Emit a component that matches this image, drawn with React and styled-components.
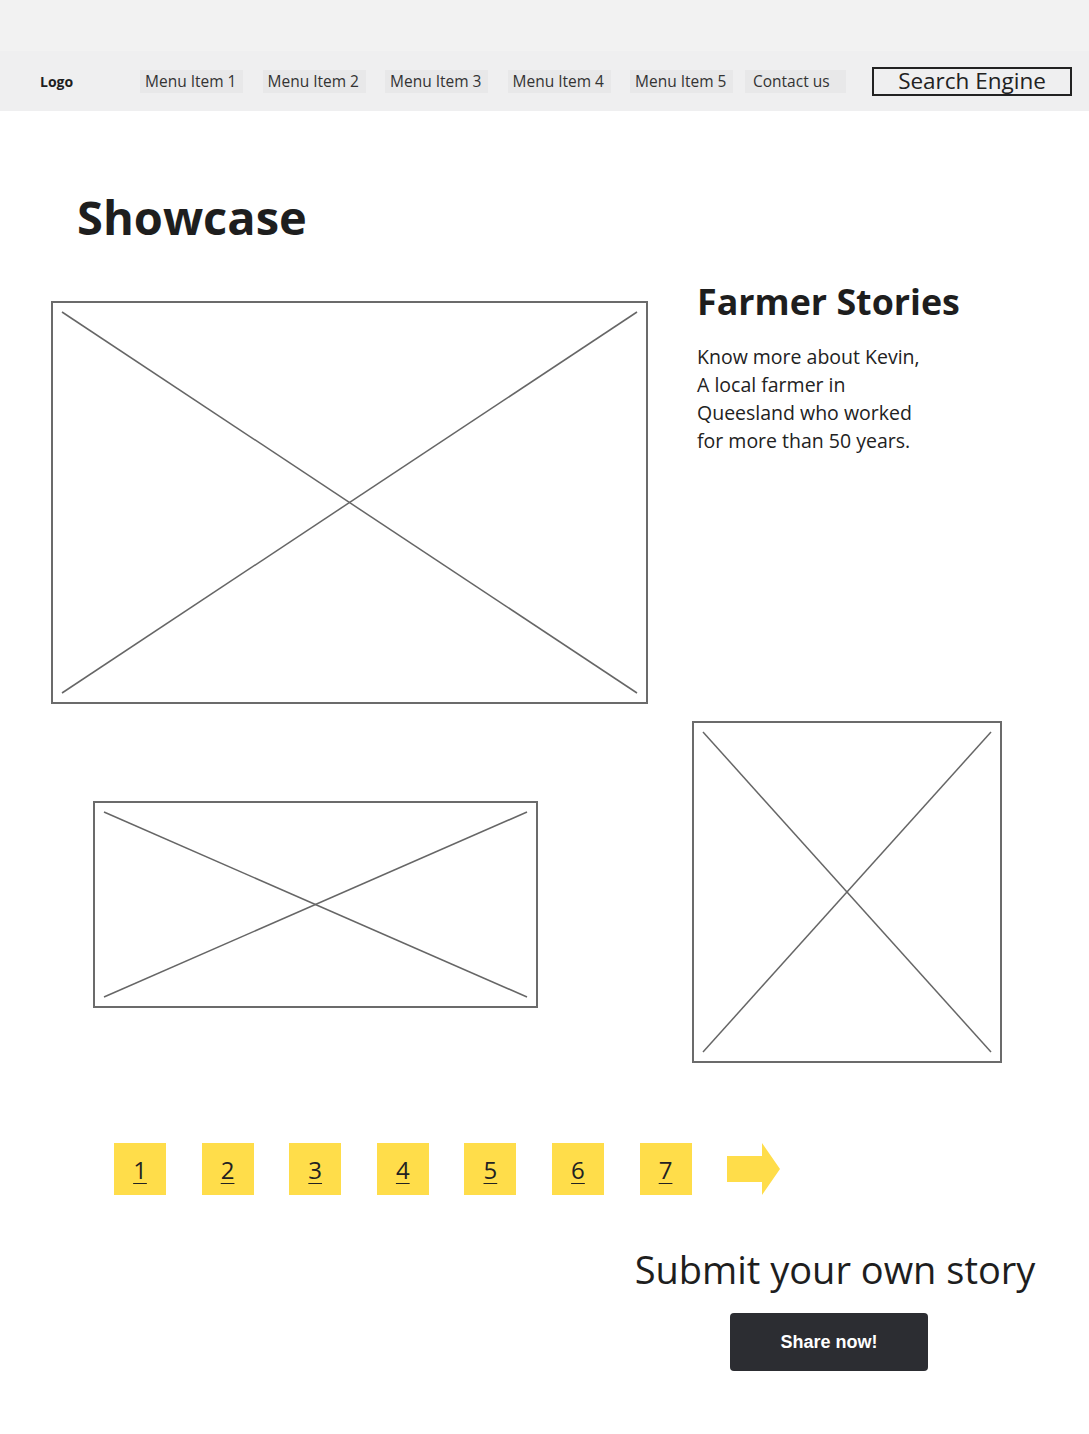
import styled, { createGlobalStyle } from 'styled-components'

//#     --- Global
const GlobalStyle = createGlobalStyle`
    body{
        margin: 0;
        background-color: #ffffff;
        font-family: "Open Sans", "Liberation Sans", sans-serif;
        color: #222222;
    }
`
const Page = styled.div`
    width: 1089px;
    min-height: 1434px;
    background-color: #ffffff;
`
//#     --- Header
const TopBand = styled.div`
    height: 51px;
    background-color: #f2f2f2;
`
const Nav = styled.nav`
    height: 60px;
    background-color: #efeff0;
    display: flex;
    align-items: center;
    padding-left: 40px;
`
const Logo = styled.div`
    width: 100px;
    font-size: 14px;
    font-weight: 700;
    color: #1e1e1e;
`
const MenuList = styled.ul`
    display: flex;
    align-items: center;
    gap: 19.5px;
    margin: 0;
    padding: 0;
    list-style: none;
`
const MenuItem = styled.li`
    width: ${ ({ wide }) => wide ? "101px" : "103px" };
    height: 23px;
    box-sizing: border-box;
    padding-left: ${ ({ wide }) => wide ? "8px" : "5px" };
    margin-left: ${ ({ wide }) => wide ? "-7.5px" : "0" };
    background-color: #e8e8e9;
    font-size: 15.5px;
    line-height: 23px;
    color: #333333;
    white-space: nowrap;
`
const SearchBox = styled.div`
    margin-left: 26px;
    width: 200px;
    height: 29px;
    box-sizing: border-box;
    border: 2px solid #222222;
    font-size: 22.5px;
    line-height: 24px;
    text-align: center;
    color: #222222;
`
//#     --- Main
const Main = styled.main`
    padding: 78px 0 0 51px;
`
const Title = styled.h1`
    margin: 0 0 56px 26px;
    font-size: 47px;
    line-height: 56px;
    font-weight: 700;
    color: #1e1e1e;
`
const Gallery = styled.div`
    display: grid;
    grid-template-columns: 597px 1fr;
    column-gap: 44px;
    row-gap: 17px;
    align-items: start;
`
const Placeholder = styled.div`
    width: ${ ({ w }) => w }px;
    height: ${ ({ h }) => h }px;
    box-sizing: border-box;
    border: 2px solid #6b6b6b;
    padding: 9px;
    margin: ${ ({ m }) => m || "0" };
    svg{
        display: block;
        width: 100%;
        height: 100%;
        overflow: visible;
    }
`
const Story = styled.div`
    padding-left: 5px;
    margin-top: -21px;
`
const StoryTitle = styled.h2`
    margin: 0 0 21px 0;
    font-size: 35.8px;
    line-height: 42px;
    font-weight: 700;
    color: #1e1e1e;
`
const StoryText = styled.p`
    margin: 0;
    font-size: 19.5px;
    line-height: 28px;
    color: #222222;
`
//#     --- Pagination
const Pager = styled.div`
    display: flex;
    align-items: center;
    gap: 35.6px;
    margin: 80px 0 0 63px;
`
const PageBox = styled.a`
    width: 52px;
    height: 52px;
    display: flex;
    align-items: center;
    justify-content: center;
    background-color: #ffdd4a;
    font-size: 24px;
    color: #222222;
    text-decoration: underline;
    text-decoration-thickness: 1px;
    text-underline-offset: 4px;
`
//#     --- Submit
const Submit = styled.section`
    display: flex;
    flex-direction: column;
    align-items: center;
    width: 420px;
    margin: 48px 0 0 574px;
`
const SubmitTitle = styled.h3`
    margin: 0;
    font-size: 38px;
    line-height: 52px;
    font-weight: 400;
    color: #1e1e1e;
    white-space: nowrap;
`
const ShareButton = styled.button`
    margin: 18px 12px 0 0;
    width: 198px;
    height: 58px;
    border: none;
    border-radius: 4px;
    background-color: #2c2d32;
    color: #ffffff;
    font-family: "Liberation Sans", Arial, sans-serif;
    font-size: 18px;
    font-weight: 700;
`

const ImageBox = props => (
    <Placeholder { ...props }>
        <svg>
            <line x1="0" y1="0" x2="100%" y2="100%" stroke="#666" strokeWidth="1.5" />
            <line x1="100%" y1="0" x2="0" y2="100%" stroke="#666" strokeWidth="1.5" />
        </svg>
    </Placeholder>
)

const Arrow = () => (
    <svg width="53" height="52" viewBox="0 0 53 52">
        <polygon points="0,13 35,13 35,0 53,26 35,52 35,39 0,39" fill="#ffdd4a" />
    </svg>
)

const menu = [ "Menu Item 1", "Menu Item 2", "Menu Item 3", "Menu Item 4", "Menu Item 5" ]
const pages = [ 1, 2, 3, 4, 5, 6, 7 ]

const App = () => {
    return(
        <Page>
            <GlobalStyle />
            <TopBand />
            <Nav>
                <Logo>Logo</Logo>
                <MenuList>
                    { menu.map( item => <MenuItem key={ item }>{ item }</MenuItem> ) }
                    <MenuItem wide>Contact us</MenuItem>
                </MenuList>
                <SearchBox>Search Engine</SearchBox>
            </Nav>

            <Main>
                <Title>Showcase</Title>
                <Gallery>
                    <ImageBox w={ 597 } h={ 403 } />
                    <Story>
                        <StoryTitle>Farmer Stories</StoryTitle>
                        <StoryText>
                            Know more about Kevin,<br/>
                            A local farmer in<br/>
                            Queesland who worked<br/>
                            for more than 50 years.
                        </StoryText>
                    </Story>
                    <ImageBox w={ 445 } h={ 207 } m="80px 0 0 42px" />
                    <ImageBox w={ 310 } h={ 342 } />
                </Gallery>

                <Pager>
                    { pages.map( p => <PageBox key={ p }>{ p }</PageBox> ) }
                    <Arrow />
                </Pager>

                <Submit>
                    <SubmitTitle>Submit your own story</SubmitTitle>
                    <ShareButton>Share now!</ShareButton>
                </Submit>
            </Main>
        </Page>
    )
}
export default App
